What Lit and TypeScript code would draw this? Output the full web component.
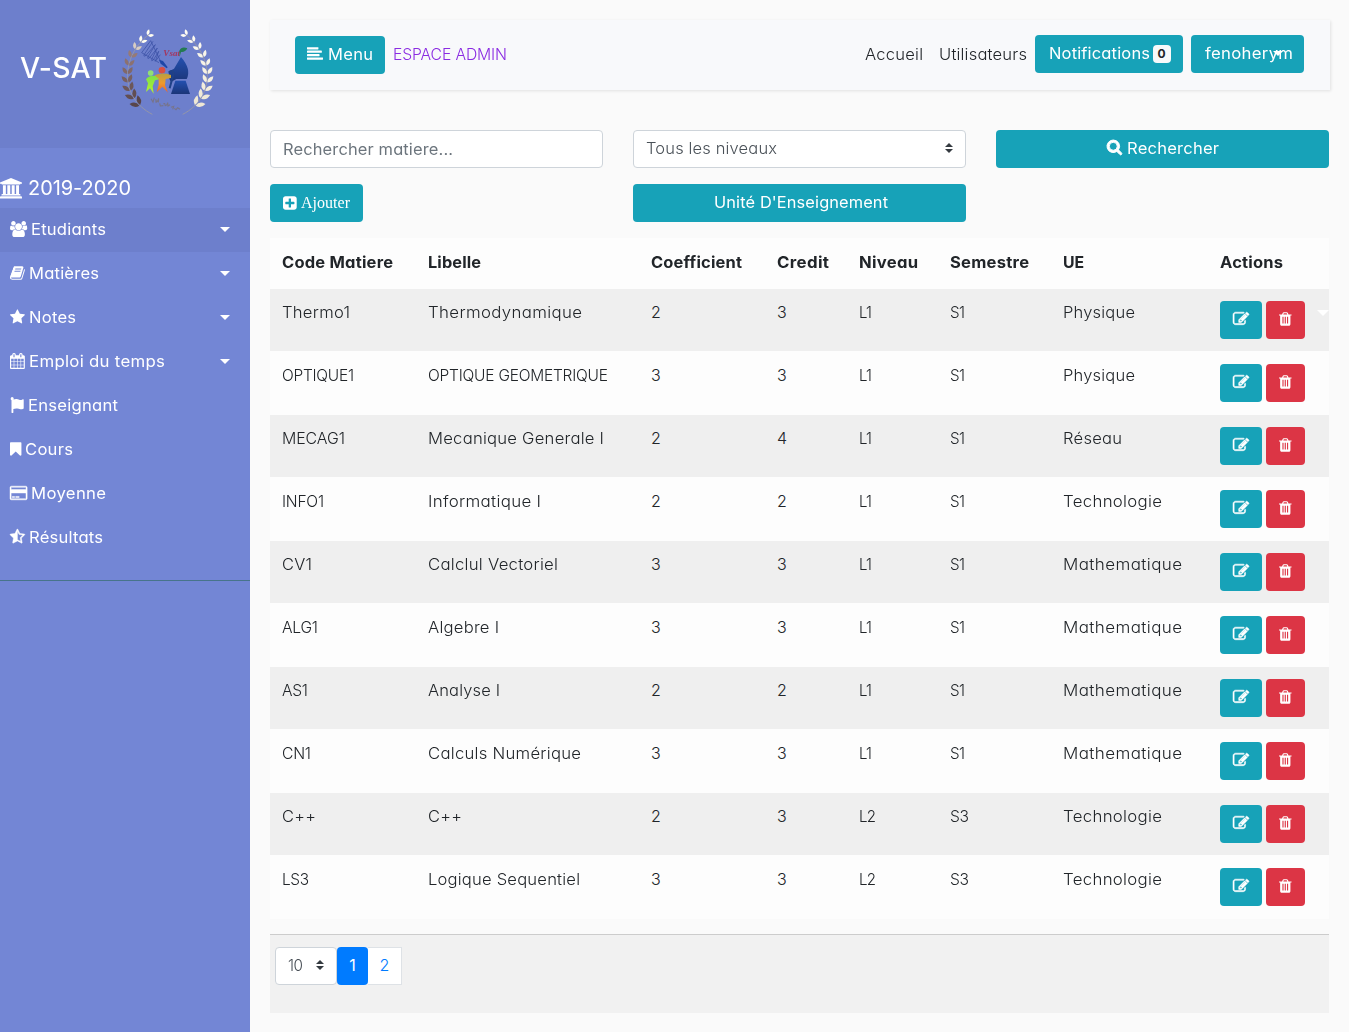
import { LitElement, html, svg, css, nothing } from "lit";
import { customElement, property } from "lit/decorators.js";

/* ---------- icons: [width in font units, path, left offset] ---------- */
const ICONS: Record<string, [number, string, number?]> = {
  university: [1920, "M960 0l960 384v128h-128q0 26-20.5 45t-48.5 19h-1526q-28 0-48.5-19t-20.5-45h-128v-128zM256 640h256v768h128v-768h256v768h128v-768h256v768h128v-768h256v768h59q28 0 48.5 19t20.5 45v64h-1664v-64q0-26 20.5-45t48.5-19h59v-768zM1851 1600q28 0 48.5 19t20.5 45v128h-1920v-128q0-26 20.5-45t48.5-19h1782z"],
  users: [1920, "M657 896q-162 5-265 128h-134q-82 0-138-40.5t-56-118.5q0-353 124-353 6 0 43.5 21t97.5 42.5 119 21.5q67 0 133-23-5 37-5 66 0 159 93 290zm1071 637q0 120-73 189.5t-194 69.5h-874q-121 0-194-69.5t-73-189.5q0-53 3.5-103.5t14-109 26.5-108.5 43-97.5 62-81 85.5-53.5 111.5-20q10 0 43 21.5t73 48 107 48 135 21.5 135-21.5 107-48 73-48 43-21.5q61 0 111.5 20t85.5 53.5 62 81 43 97.5 26.5 108.5 14 109 3.5 103.5zm-1024-1277q0 106-75 181t-181 75-181-75-75-181 75-181 181-75 181 75 75 181zm704 384q0 159-112.5 271.5t-271.5 112.5-271.5-112.5-112.5-271.5 112.5-271.5 271.5-112.5 271.5 112.5 112.5 271.5zm576 225q0 78-56 118.5t-138 40.5h-134q-103-123-265-128 93-131 93-290 0-29-5-66 66 23 133 23 59 0 119-21.5t97.5-42.5 43.5-21q124 0 124 353zm-128-609q0 106-75 181t-181 75-181-75-75-181 75-181 181-75 181 75 75 181z", 64],
  book: [1664, "M1703 478q40 57 18 129l-275 906q-19 64-76.5 107.5t-122.5 43.5h-923q-77 0-148.5-53.5t-99.5-131.5q-24-67-2-127 0-4 3-27t4-37q1-8-3-21.5t-3-19.5q2-11 8-21t16.5-23.5 16.5-23.5q23-38 45-91.5t30-91.5q3-10 .5-30t-.5-28q3-11 17-28t17-23q21-36 42-92t25-90q1-9-2.5-32t.5-28q4-13 22-30.5t22-22.5q19-26 42.5-84.5t27.5-96.5q1-8-3-25.5t-2-26.5q2-8 9-18t18-23 17-21q8-12 16.5-30.5t15-35 16-36 19.5-32 26.5-23.5 36-11.5 47.5 5.5l-1 3q38-9 51-9h761q74 0 114 56t18 130l-274 906q-36 119-71.5 153.5t-128.5 34.5h-869q-27 0-38 15-11 16-1 43 24 70 144 70h923q29 0 56-15.5t35-41.5l300-987q7-22 5-57 38 15 59 43zm-1064 2q-4 13 2 22.5t20 9.5h608q13 0 25.5-9.5t16.5-22.5l21-64q4-13-2-22.5t-20-9.5h-608q-13 0-25.5 9.5t-16.5 22.5zm-83 256q-4 13 2 22.5t20 9.5h608q13 0 25.5-9.5t16.5-22.5l21-64q4-13-2-22.5t-20-9.5h-608q-13 0-25.5 9.5t-16.5 22.5z", 64],
  star: [1664, "M1664 647q0 22-26 48l-363 354 86 500q1 7 1 20 0 21-10.5 35.5t-30.5 14.5q-19 0-40-12l-449-236-449 236q-22 12-40 12-21 0-31.5-14.5t-10.5-35.5q0-6 2-20l86-500-364-354q-25-27-25-48 0-37 56-46l502-73 225-455q19-41 49-41t49 41l225 455 502 73q56 9 56 46z"],
  calendar: [1664, "M192 1664h288v-288h-288v288zm352 0h320v-288h-320v288zm-352-352h288v-320h-288v320zm352 0h320v-320h-320v320zm-352-384h288v-288h-288v288zm736 736h320v-288h-320v288zm-384-736h320v-288h-320v288zm768 736h288v-288h-288v288zm-384-352h320v-320h-320v320zm-352-864v-288q0-13-9.5-22.5t-22.5-9.5h-64q-13 0-22.5 9.5t-9.5 22.5v288q0 13 9.5 22.5t22.5 9.5h64q13 0 22.5-9.5t9.5-22.5zm736 864h288v-320h-288v320zm-384-384h320v-288h-320v288zm384 0h288v-288h-288v288zm32-480v-288q0-13-9.5-22.5t-22.5-9.5h-64q-13 0-22.5 9.5t-9.5 22.5v288q0 13 9.5 22.5t22.5 9.5h64q13 0 22.5-9.5t9.5-22.5zm384-64v1280q0 52-38 90t-90 38h-1408q-52 0-90-38t-38-90v-1280q0-52 38-90t90-38h128v-96q0-66 47-113t113-47h64q66 0 113 47t47 113v96h384v-96q0-66 47-113t113-47h64q66 0 113 47t47 113v96h128q52 0 90 38t38 90z", 64],
  flag: [1536, "M224 0a192 192 0 0 1 170 282q150-60 340-50 160 10 300 70 130 50 250 20 90-20 180-60 72-20 72 50v940q0 40-40 60-190 80-340 50-180-60-340-80-220-30-440 60v402q0 48-48 48h-112q-48 0-48-48V352A192 192 0 0 1 224 0z"],
  bookmark: [1280, "M1164 128q23 0 44 9 33 13 52.5 41t19.5 62v1289q0 34-19.5 62t-52.5 41q-19 8-44 8-48 0-83-32l-441-424-441 424q-36 33-83 33-23 0-44-9-33-13-52.5-41t-19.5-62v-1289q0-34 19.5-62t52.5-41q21-9 44-9h1048z"],
  card: [1920, "M1760 128q66 0 113 47t47 113v1216q0 66-47 113t-113 47h-1600q-66 0-113-47t-47-113v-1216q0-66 47-113t113-47h1600zm-1600 128q-13 0-22.5 9.5t-9.5 22.5v224h1664v-224q0-13-9.5-22.5t-22.5-9.5h-1600zm1600 1280q13 0 22.5-9.5t9.5-22.5v-608h-1664v608q0 13 9.5 22.5t22.5 9.5h1600zm-1504-128v-128h256v128h-256zm384 0v-128h384v128h-384z"],
  halfstar: [1664, "M1186 925l257-250-356-52-66-10-30-60-159-322v963l59 31 318 168-60-355-12-66zm452-262l-363 354 86 500q5 33-6 51.5t-34 18.5q-17 0-40-12l-449-236-449 236q-23 12-40 12-23 0-34-18.5t-6-51.5l86-500-364-354q-32-32-23-59.5t54-34.5l502-73 225-455q20-41 49-41 28 0 49 41l225 455 502 73q45 7 54 34.5t-24 59.5z"],
  menu: [1792, "M1792 1344v128q0 26-19 45t-45 19h-1664q-26 0-45-19t-19-45v-128q0-26 19-45t45-19h1664q26 0 45 19t19 45zm-384-384v128q0 26-19 45t-45 19h-1280q-26 0-45-19t-19-45v-128q0-26 19-45t45-19h1280q26 0 45 19t19 45zm256-384v128q0 26-19 45t-45 19h-1536q-26 0-45-19t-19-45v-128q0-26 19-45t45-19h1536q26 0 45 19t19 45zm-384-384v128q0 26-19 45t-45 19h-1152q-26 0-45-19t-19-45v-128q0-26 19-45t45-19h1152q26 0 45 19t19 45z"],
  search: [1664, "M704 0a704 704 0 0 1 580 1103l343 343a128 128 0 0 1-181 181l-343-343A704 704 0 1 1 704 0zM704 256a448 448 0 1 0 0 896a448 448 0 1 0 0-896z"],
  plus: [1536, "M1280 960v-128q0-26-19-45t-45-19h-320v-320q0-26-19-45t-45-19h-128q-26 0-45 19t-19 45v320h-320q-26 0-45 19t-19 45v128q0 26 19 45t45 19h320v320q0 26 19 45t45 19h128q26 0 45-19t19-45v-320h320q26 0 45-19t19-45zm256-544v960q0 119-84.5 203.5t-203.5 84.5h-960q-119 0-203.5-84.5t-84.5-203.5v-960q0-119 84.5-203.5t203.5-84.5h960q119 0 203.5 84.5t84.5 203.5z"],
  edit: [1792, "M888 1184l116-116-152-152-116 116v56h96v96h56zm440-720q-16-16-33 1l-350 350q-17 17-1 33t33-1l350-350q17-17 1-33zm80 594v190q0 119-84.5 203.5t-203.5 84.5h-832q-119 0-203.5-84.5t-84.5-203.5v-832q0-119 84.5-203.5t203.5-84.5h832q63 0 117 25 15 7 18 23 3 17-9 29l-49 49q-14 14-32 8-23-6-45-6h-832q-66 0-113 47t-47 113v832q0 66 47 113t113 47h832q66 0 113-47t47-113v-126q0-13 9-22l64-64q15-15 35-7t20 29zm-96-738l288 288-672 672h-288v-288zm444 132l-92 92-288-288 92-92q28-28 68-28t68 28l152 152q28 28 28 68t-28 68z"],
  trash: [1408, "M512 1376v-704q0-14-9-23t-23-9h-64q-14 0-23 9t-9 23v704q0 14 9 23t23 9h64q14 0 23-9t9-23zm256 0v-704q0-14-9-23t-23-9h-64q-14 0-23 9t-9 23v704q0 14 9 23t23 9h64q14 0 23-9t9-23zm256 0v-704q0-14-9-23t-23-9h-64q-14 0-23 9t-9 23v704q0 14 9 23t23 9h64q14 0 23-9t9-23zm-544-992h448l-48-117q-7-9-17-11h-317q-10 2-17 11zm928 32v64q0 14-9 23t-23 9h-96v948q0 83-47 143.5t-113 60.5h-832q-66 0-113-58.5t-47-141.5v-952h-96q-14 0-23-9t-9-23v-64q0-14 9-23t23-9h309l70-167q15-37 54-63t79-26h320q40 0 79 26t54 63l70 167h309q14 0 23 9t9 23z"],
};
const STROKE: Record<string, number> = { edit: 60, card: 50, halfstar: 50, search: 110 };

const icon = (name: string, size = 16) => {
  const [w, d, x = 0] = ICONS[name];
  return html`<svg class="icon" width=${(w / 1792) * size} height=${size} viewBox="${x} 0 ${w} 1792" aria-hidden="true"><path d=${d} stroke="currentColor" stroke-width=${STROKE[name] ?? 0}></path></svg>`;
};

/* A run of text widened, partly by scale and partly by tracking, to span `w` pixels. */
@customElement("tracked-text")
export class TrackedText extends LitElement {
  @property() text = "";
  @property({ type: Number }) w = 0;

  static styles = css`
    :host { display: inline-block; white-space: nowrap; }
    .run { display: inline-block; white-space: pre; transform-origin: 0 50%; }
  `;

  updated() {
    const run = this.renderRoot.querySelector<HTMLElement>(".run")!;
    const count = this.text.length;
    if (!this.w || count < 2) return;
    run.style.letterSpacing = "0px";
    run.style.transform = "none";
    const natural = run.getBoundingClientRect().width;
    const full = this.w + 1;
    const scale = 1 + (full / natural - 1) * 0.6;
    const gap = (full / scale - natural) / (count - 1);
    run.style.letterSpacing = `${gap.toFixed(3)}px`;
    run.style.transform = `scaleX(${scale.toFixed(4)})`;
    this.style.width = `${full + 1}px`;
  }

  render() {
    return html`<span class="run">${this.text}</span>`;
  }
}

const t = (text: string, w = 0) => html`<tracked-text .text=${text} .w=${w}></tracked-text>`;

/* ---------- emblem ---------- */
type Pt = [number, number];
const at = (p: Pt[], u: number): Pt => {
  const v = 1 - u;
  const k = [v * v * v, 3 * v * v * u, 3 * v * u * u, u * u * u];
  return [0, 1].map((i) => k.reduce((s, c, j) => s + c * p[j][i], 0)) as Pt;
};
const mix = (a: number[], b: number[], k: number) => `rgb(${a.map((c, i) => Math.round(c + (b[i] - c) * k)).join(",")})`;

@customElement("vsat-emblem")
export class VsatEmblem extends LitElement {
  static styles = css`
    :host { display: block; }
    .emblem { display: block; filter: blur(0.3px); }
    .word { font: italic 700 26px "Liberation Serif", serif; }
  `;

  private branch(p: Pt[], side: number, colour: (u: number) => string) {
    const leaves = [];
    const n = 10;
    for (let i = 0; i < n; i++) {
      const u = 0.14 + (i / (n - 1)) * 0.84;
      const [x, y] = at(p, u);
      const [x2, y2] = at(p, u + 0.02);
      const dir = (Math.atan2(y2 - y, x2 - x) * 180) / Math.PI;
      const len = 33 - i * 1.3;
      const fat = 13 - i * 0.45;
      for (const s of [-1, 1]) {
        const rot = dir + s * (s === side ? 35 : 30);
        const d = `M3 0Q${len * 0.5} ${-fat} ${len} 0Q${len * 0.5} ${fat} 3 0z`;
        leaves.push(svg`<path transform="translate(${x} ${y}) rotate(${rot})" d=${d} fill=${colour(u)}></path>`);
      }
    }
    const stem = `M${p[0]}C${p[1]} ${p[2]} ${p[3]}`;
    return svg`<path d=${stem} fill="none" stroke="#9496a8" stroke-width="3"></path>${leaves}`;
  }

  render() {
    const left: Pt[] = [[112, 283], [12, 232], [18, 108], [101, 44]];
    const right: Pt[] = [[203, 283], [303, 232], [297, 108], [212, 44]];
    const brown = (u: number) => (u < 0.7 ? mix([72, 56, 64], [150, 122, 118], u / 0.7) : mix([150, 122, 118], [255, 253, 240], Math.min(1, (u - 0.7) / 0.15)));
    const cream = (u: number) => mix([236, 228, 208], [255, 253, 244], u);
    return html`<svg class="emblem" width="105" height="105" viewBox="0 0 315 315" role="img" aria-label="V-SAT">
      <defs>
        <linearGradient id="blue" x1="0" y1="0" x2="0" y2="1">
          <stop offset="0" stop-color="#2350b0"></stop><stop offset="1" stop-color="#1b3578"></stop>
        </linearGradient>
        <linearGradient id="green" x1="0" y1="0" x2="0" y2="1">
          <stop offset="0" stop-color="#7be04a"></stop><stop offset="1" stop-color="#b6f030"></stop>
        </linearGradient>
        <linearGradient id="orange" x1="0" y1="0" x2="0" y2="1">
          <stop offset="0" stop-color="#b8a040"></stop><stop offset=".5" stop-color="#f09a2c"></stop><stop offset="1" stop-color="#e8602c"></stop>
        </linearGradient>
      </defs>
      <g>${this.branch(left, -1, brown)}</g>
      <g>${this.branch(right, 1, cream)}</g>
      <path d="M107 62L80 98M114 64L88 103Q84 112 93 106L121 74M121 74L99 110Q96 119 104 113L127 84M127 84L110 118Q108 125 115 120L131 94M131 94L121 124L136 104M80 98L132 128M107 62L136 122" fill="none" stroke="#3a50a4" stroke-width="2.2"></path>
      <path d="M132 119l12 4 14 19-3 3-18-14z" fill="#1f47a8"></path>
      <text class="word" x="145" y="109" fill="#a3375f" textLength="50" lengthAdjust="spacingAndGlyphs">Vsat</text>
      <path d="M193 92Q200 78 217 85Q210 98 198 96L194 110z" fill="#237a52"></path>
      <path d="M198 111Q230 148 215 177H184L168 186Q156 168 164 153L177 146z" fill="url(#blue)"></path>
      <path d="M181 182H212L225 222H168z" fill="url(#blue)"></path>
      <circle cx="107" cy="159" r="8.5" fill="#91df76"></circle>
      <path d="M93 178Q102 164 122 168L138 165V176L120 181L113 199L116 221L105 205L93 216L99 190z" fill="url(#green)"></path>
      <circle cx="141" cy="151" r="10" fill="#d84f43"></circle>
      <path d="M118 166Q140 156 168 165V174L152 177L150 196L159 218L142 200L125 217L131 194V176z" fill="url(#orange)"></path>
      <path d="M161 158Q170 148 176 158L170 182L164 205" stroke="#204187" stroke-width="6" fill="none"></path>
      <path d="M108 236l6 10 4-13M120 240q5-3 3 4t6-3l2-6-1 12M134 250l2 8 9-1M145 252q5-4 5 2t6 0l2-6 1 10 6-4M168 262l8-3-3 9M178 265l5 4 5-6 7 5" fill="none" stroke="#77748a" stroke-width="3.4"></path>
    </svg>`;
  }
}

/* ---------- data ---------- */
type Link = [string, string, number, boolean];
const LINKS: Link[] = [
  ["users", "Etudiants", 74, true],
  ["book", "Matières", 69, true],
  ["star", "Notes", 46, true],
  ["calendar", "Emploi du temps", 135, true],
  ["flag", "Enseignant", 89, false],
  ["bookmark", "Cours", 47, false],
  ["card", "Moyenne", 74, false],
  ["halfstar", "Résultats", 73, false],
];
type Cell = [string, number];
const HEAD: Cell[] = [["Code Matiere", 110], ["Libelle", 52], ["Coefficient", 90], ["Credit", 51], ["Niveau", 58], ["Semestre", 78], ["UE", 20], ["Actions", 62]];
const L1: Cell = ["L1", 12], L2: Cell = ["L2", 16], S1: Cell = ["S1", 14], S3: Cell = ["S3", 18];
const N2: Cell = ["2", 0], N3: Cell = ["3", 0], N4: Cell = ["4", 0];
const PHY: Cell = ["Physique", 71], RES: Cell = ["Réseau", 58], TEC: Cell = ["Technologie", 98], MAT: Cell = ["Mathematique", 118];
const ROWS: Cell[][] = [
  [["Thermo1", 67], ["Thermodynamique", 153], N2, N3, L1, S1, PHY],
  [["OPTIQUE1", 71], ["OPTIQUE GEOMETRIQUE", 179], N3, N3, L1, S1, PHY],
  [["MECAG1", 62], ["Mecanique Generale I", 175], N2, N4, L1, S1, RES],
  [["INFO1", 41], ["Informatique I", 112], N2, N2, L1, S1, TEC],
  [["CV1", 29], ["Calclul Vectoriel", 129], N3, N3, L1, S1, MAT],
  [["ALG1", 35], ["Algebre I", 70], N3, N3, L1, S1, MAT],
  [["AS1", 25], ["Analyse I", 71], N2, N2, L1, S1, MAT],
  [["CN1", 28], ["Calculs Numérique", 152], N3, N3, L1, S1, MAT],
  [["C++", 33], ["C++", 33], N2, N3, L2, S3, TEC],
  [["LS3", 26], ["Logique Sequentiel", 151], N3, N3, L2, S3, TEC],
];

@customElement("app-root")
export class AppRoot extends LitElement {
  static styles = css`
    :host {
      display: flex;
      height: 1032px;
      overflow: hidden;
      background: #fafafa;
      color: #212529;
      font: 300 16px/24px Inter, "Open Sans", sans-serif;
      font-feature-settings: "cv11", "ss03";
    }
    * { box-sizing: border-box; }
    .icon { display: block; flex: none; fill: currentColor; overflow: visible; }

    .sidebar { width: 250px; flex: none; background: #7386d5; color: #fff; font-weight: 400; }
    .brand { height: 148px; padding: 20px 0 0 20px; display: flex; background: #6d7fcc; }
    .brand-name { width: 95px; padding-top: 31px; font-size: 28px; line-height: 34px; font-weight: 500; }
    .links { padding: 20px 0; border-bottom: 1px solid #47748b; }
    .year { height: 40px; display: flex; align-items: center; gap: 6px; font-size: 20px; }
    .link { height: 44px; padding: 0 20px 2px 10px; display: flex; align-items: center; gap: 4px; }
    .link.active { background: #6d7fcc; }
    .caret { width: 0; height: 0; margin-left: auto; border: 5px solid transparent; border-top-color: #fff; border-bottom: 0; }

    .content { width: 1099px; padding: 20px 20px 0; }
    .bar { width: 1060px; height: 70px; padding: 0 26px 0 25px; display: flex; align-items: center; background: #f8f9fb; box-shadow: 1px 1px 3px rgba(0, 0, 0, 0.1); }
    .space { margin: -2px 0 0 8px; color: #8a2be2; }
    .nav { margin-left: auto; display: flex; align-items: center; }
    .nav .item { margin: -2px 15px 0 0; }
    .nav .item.last { margin-right: 7px; }
    .btn { height: 38px; padding: 0 12px 2px; display: flex; align-items: center; justify-content: center; gap: 4px; border: 0; border-radius: 4px; background: #17a2b8; color: #fff; font: inherit; font-weight: 400; font-feature-settings: inherit; }
    .btn.menu { width: 90px; }
    .btn.notif { width: 148px; margin: -2px 8px 0 0; gap: 3px; }
    .btn.user { position: relative; width: 113px; margin-top: -2px; }
    .btn.user .caret { position: absolute; left: 82px; top: 16px; }
    .badge { width: 18px; height: 18px; margin-top: 1px; border-radius: 4px; background: #f8f9fa; color: #212529; font-size: 12px; line-height: 18px; font-weight: 700; text-align: center; }

    .filters { margin-top: 40px; width: 1059px; display: grid; grid-template-columns: repeat(3, 333px); gap: 16px 30px; }
    .field { height: 38px; padding: 0 12px; display: flex; align-items: center; border: 1px solid #ced4da; border-radius: 4px; background: #fff; color: #6c757d; font-weight: 400; }
    .field.select { justify-content: space-between; padding-bottom: 2px; color: #495057; font-weight: 300; }
    .btn.add { width: 93px; padding-bottom: 1px; font-family: "Liberation Serif", serif; font-feature-settings: normal; }

    .table { position: relative; margin-top: 16px; width: 1059px; background: #fdfdfd; }
    .row { display: grid; grid-template-columns: 146px 223px 126px 82px 91px 113px 157px 121px; height: 63px; padding-top: 11px; }
    .row:nth-child(even) { background: linear-gradient(#efefef 62px, #fdfdfd 62px); }
    .row.head { height: 51px; padding-top: 12px; font-weight: 700; }
    .cell { padding-left: 12px; }
    .actions { display: flex; gap: 4px; padding: 1px 0 0 12px; }
    .btn.edit { width: 42px; padding: 0 13px 2px; }
    .btn.del { width: 39px; padding: 0 13px 2px; background: #dc3545; }
    .stray { position: absolute; right: 0; top: 72px; border: 6px solid transparent; border-top-color: #fff; border-bottom: 0; }

    .pager { margin-top: 15px; width: 1059px; height: 79px; padding: 12px 5px; display: flex; border-top: 1px solid #ccc; background: #f1f1f1; }
    .size { width: 62px; }
    .page { width: 34px; height: 38px; display: flex; align-items: center; justify-content: center; border: 1px solid #dee2e6; border-left: 0; background: #fff; color: #007bff; padding-bottom: 2px; }
    .page.on { width: 31px; border: 0; border-radius: 4px; background: #007bff; color: #fff; font-weight: 400; }
  `;

  private arrows() {
    return html`<svg class="icon" width="8" height="10" viewBox="0 0 4 5"><path fill="#343a40" d="M2 0L0 2h4zm0 5L0 3h4z"></path></svg>`;
  }

  render() {
    return html`
      <nav class="sidebar">
        <div class="brand">
          <div class="brand-name">${t("V-SAT", 86)}</div>
          <vsat-emblem></vsat-emblem>
        </div>
        <div class="links">
          <div class="year">${icon("university", 20.5)}${t("2019-2020", 102)}</div>
          ${LINKS.map(([ic, label, w, sub], i) => html`
            <div class="link ${i === 0 ? "active" : ""}">
              ${icon(ic)}${t(label, w)}${sub ? html`<span class="caret"></span>` : nothing}
            </div>`)}
        </div>
      </nav>
      <main class="content">
        <header class="bar">
          <button class="btn menu">${icon("menu")}${t("Menu", 44)}</button>
          <span class="space">${t("ESPACE ADMIN", 113)}</span>
          <div class="nav">
            <span class="item">${t("Accueil", 57)}</span>
            <span class="item last">${t("Utilisateurs", 87)}</span>
            <button class="btn notif">${t("Notifications", 100)}<span class="badge">0</span></button>
            <button class="btn user">${t("fenoherym", 87)}<span class="caret"></span></button>
          </div>
        </header>
        <section class="filters">
          <div class="field">${t("Rechercher matiere...", 169)}</div>
          <div class="field select">${t("Tous les niveaux", 130)}${this.arrows()}</div>
          <button class="btn">${icon("search")}${t("Rechercher", 91)}</button>
          <button class="btn add">${icon("plus")}${t("Ajouter", 48)}</button>
          <button class="btn">${t("Unité D'Enseignement", 173)}</button>
        </section>
        <section class="table">
          <div class="row head">${HEAD.map(([s, w]) => html`<div class="cell">${t(s, w)}</div>`)}</div>
          ${ROWS.map((r) => html`
            <div class="row">
              ${r.map(([s, w]) => html`<div class="cell">${t(s, w)}</div>`)}
              <div class="actions">
                <button class="btn edit">${icon("edit")}</button>
                <button class="btn del">${icon("trash")}</button>
              </div>
            </div>`)}
          <span class="stray"></span>
        </section>
        <footer class="pager">
          <div class="field select size">${t("10", 14)}${this.arrows()}</div>
          <span class="page on">1</span>
          <span class="page">2</span>
        </footer>
      </main>
    `;
  }
}
